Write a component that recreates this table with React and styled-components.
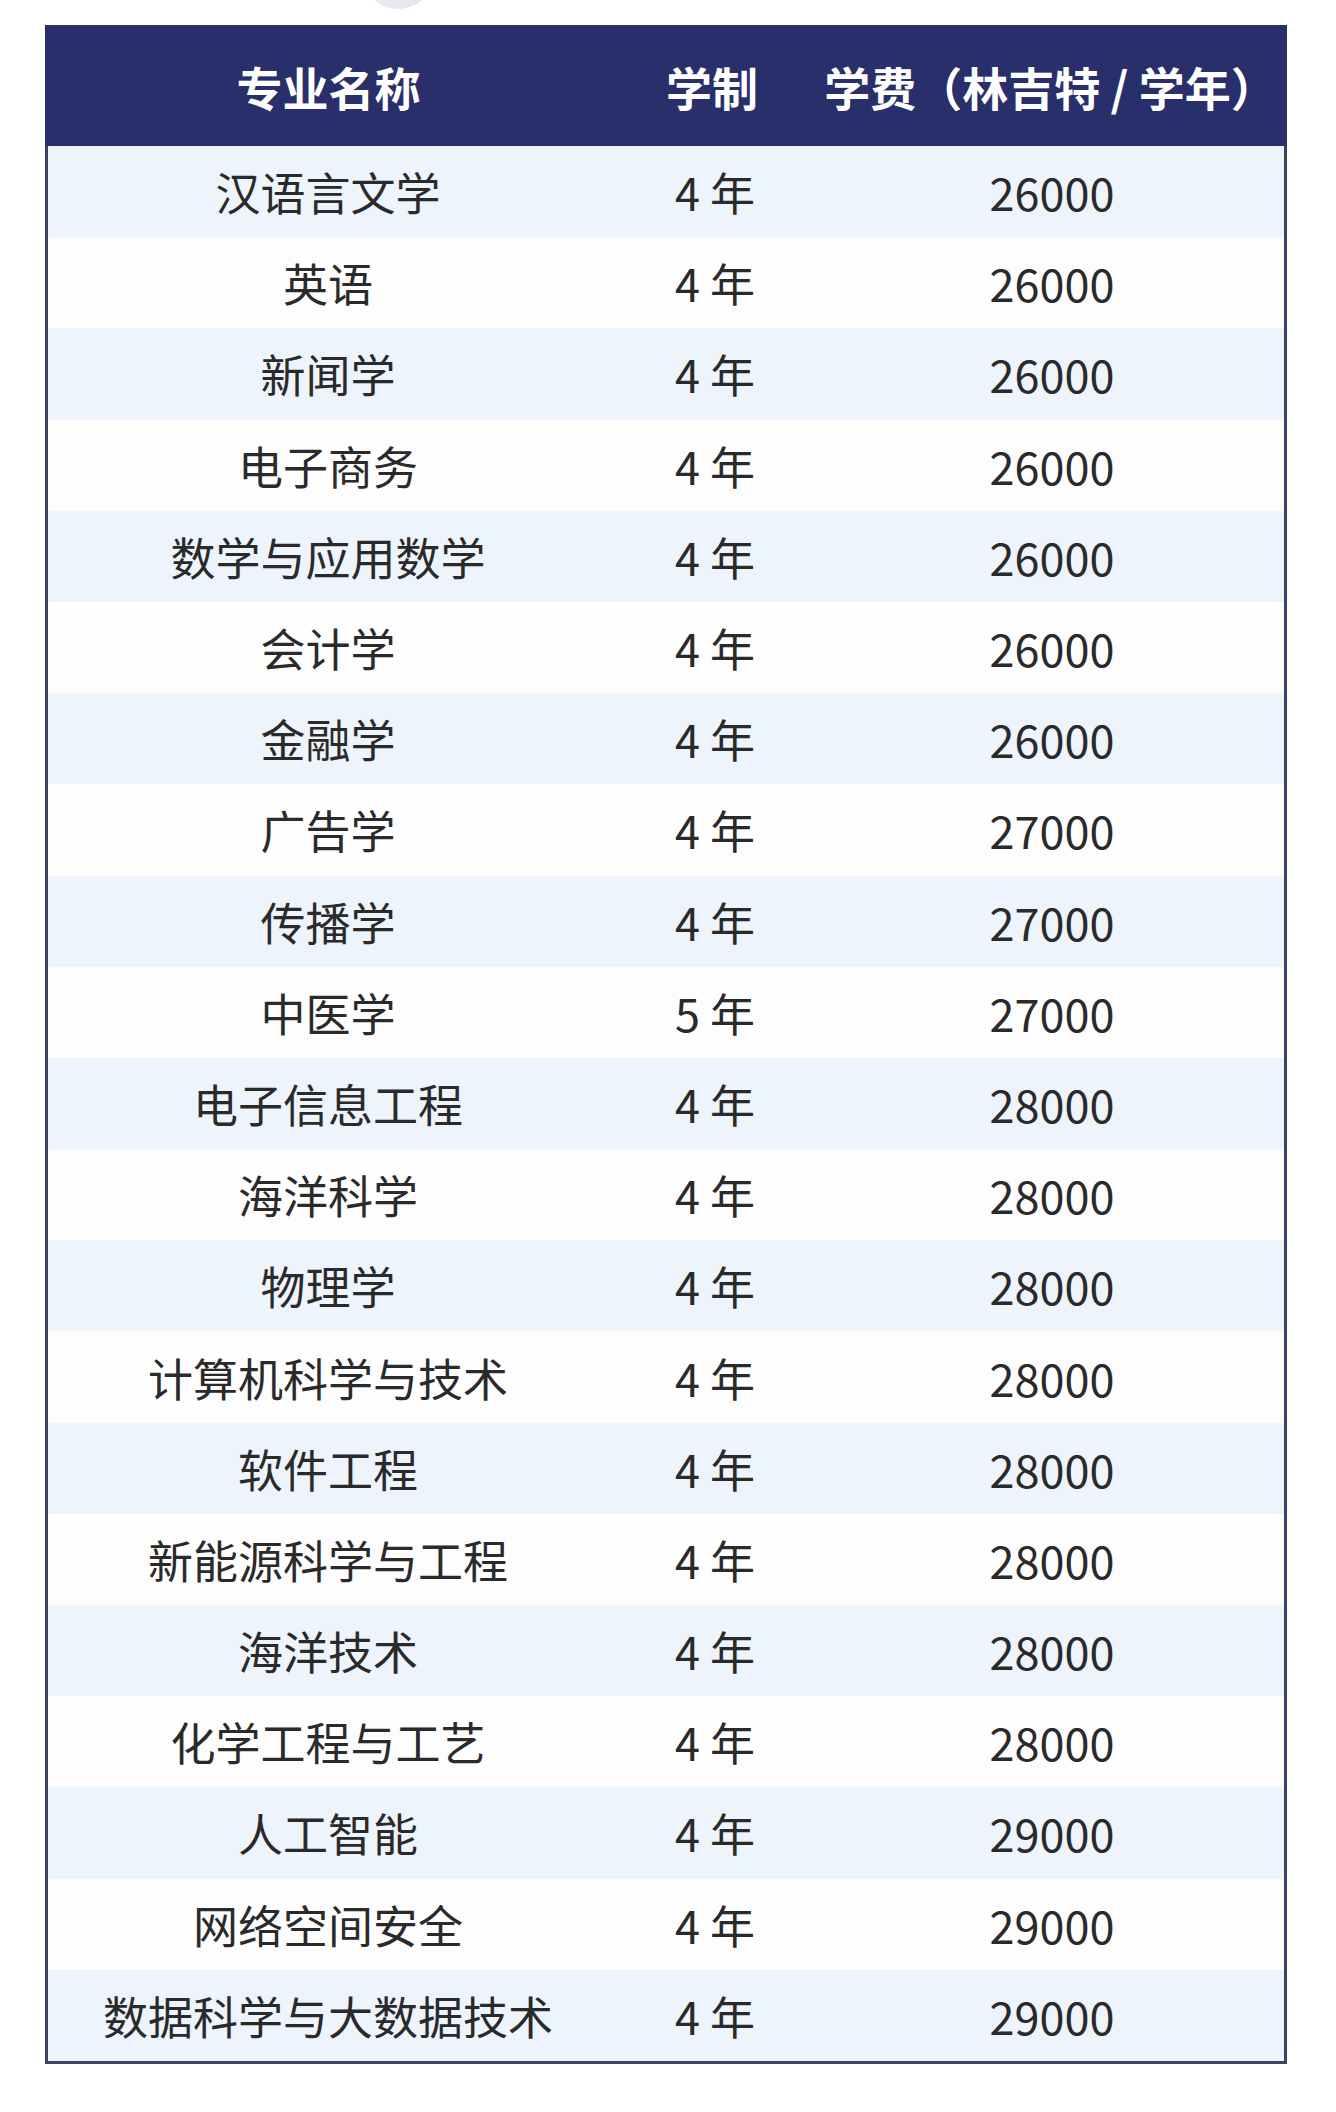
import React from 'react';
import styled, { createGlobalStyle } from 'styled-components';

const GlobalStyle = createGlobalStyle`
  html, body {
    margin: 0;
    padding: 0;
    background: #ffffff;
  }
  body {
    font-family: "Noto Sans CJK SC", "Noto Sans", sans-serif;
  }
`;

const header_color = '#282f6a';
const border_color = '#3c4263';
const stripe_color = '#eef4fc';

const Page = styled.div`
  width: 1336px;
  min-height: 2112px;
  background: #ffffff;
`;

const TopStrip = styled.div`
  height: 25px;
  overflow: hidden;
`;

const Table = styled.div`
  margin-left: 45px;
  width: 1242px;
`;

const HeaderRow = styled.div`
  display: grid;
  grid-template-columns: 563px 206px 1fr;
  height: 121px;
  background: ${header_color};
  align-items: center;
`;

const HeadCell = styled.div`
  color: #ffffff;
  font-weight: 700;
  font-size: 46px;
  text-align: center;
  white-space: nowrap;
  padding-left: ${props => props.$shift || 0}px;
`;

const Body = styled.div`
  border: 3px solid ${border_color};
  border-top: none;
`;

const Row = styled.div`
  display: grid;
  grid-template-columns: 560px 206px 1fr;
  height: 91.2px;
  align-items: center;
  background: ${props => props.$striped ? stripe_color : '#fdfdfe'};
`;

const Cell = styled.div`
  color: #2a2a2a;
  font-size: 45px;
  font-weight: 400;
  text-align: center;
  white-space: nowrap;
  padding-left: ${props => props.$shift || 0}px;
`;

const majors = [
    ['汉语言文学', '4 年', '26000'],
    ['英语', '4 年', '26000'],
    ['新闻学', '4 年', '26000'],
    ['电子商务', '4 年', '26000'],
    ['数学与应用数学', '4 年', '26000'],
    ['会计学', '4 年', '26000'],
    ['金融学', '4 年', '26000'],
    ['广告学', '4 年', '27000'],
    ['传播学', '4 年', '27000'],
    ['中医学', '5 年', '27000'],
    ['电子信息工程', '4 年', '28000'],
    ['海洋科学', '4 年', '28000'],
    ['物理学', '4 年', '28000'],
    ['计算机科学与技术', '4 年', '28000'],
    ['软件工程', '4 年', '28000'],
    ['新能源科学与工程', '4 年', '28000'],
    ['海洋技术', '4 年', '28000'],
    ['化学工程与工艺', '4 年', '28000'],
    ['人工智能', '4 年', '29000'],
    ['网络空间安全', '4 年', '29000'],
    ['数据科学与大数据技术', '4 年', '29000'],
];

class App extends React.Component {
    render() {
        return (
            <Page>
                <GlobalStyle />
                <TopStrip>
                    <svg width="1336" height="25">
                        <defs>
                            <linearGradient id="arc" x1="0" y1="0" x2="1" y2="1">
                                <stop offset="0" stopColor="#f4f6f9" />
                                <stop offset="1" stopColor="#dfe4ea" />
                            </linearGradient>
                        </defs>
                        <ellipse cx="398" cy="-22" rx="34" ry="31" fill="url(#arc)" />
                    </svg>
                </TopStrip>
                <Table>
                    <HeaderRow>
                        <HeadCell $shift={4}>专业名称</HeadCell>
                        <HeadCell $shift={2}>学制</HeadCell>
                        <HeadCell>学费（林吉特 / 学年）</HeadCell>
                    </HeaderRow>
                    <Body>
                        {majors.map((m, i) => (
                            <Row key={m[0]} $striped={i % 2 === 0}>
                                <Cell>{m[0]}</Cell>
                                <Cell $shift={8}>{m[1]}</Cell>
                                <Cell $shift={6}>{m[2]}</Cell>
                            </Row>
                        ))}
                    </Body>
                </Table>
            </Page>
        );
    }
}

export default App;
